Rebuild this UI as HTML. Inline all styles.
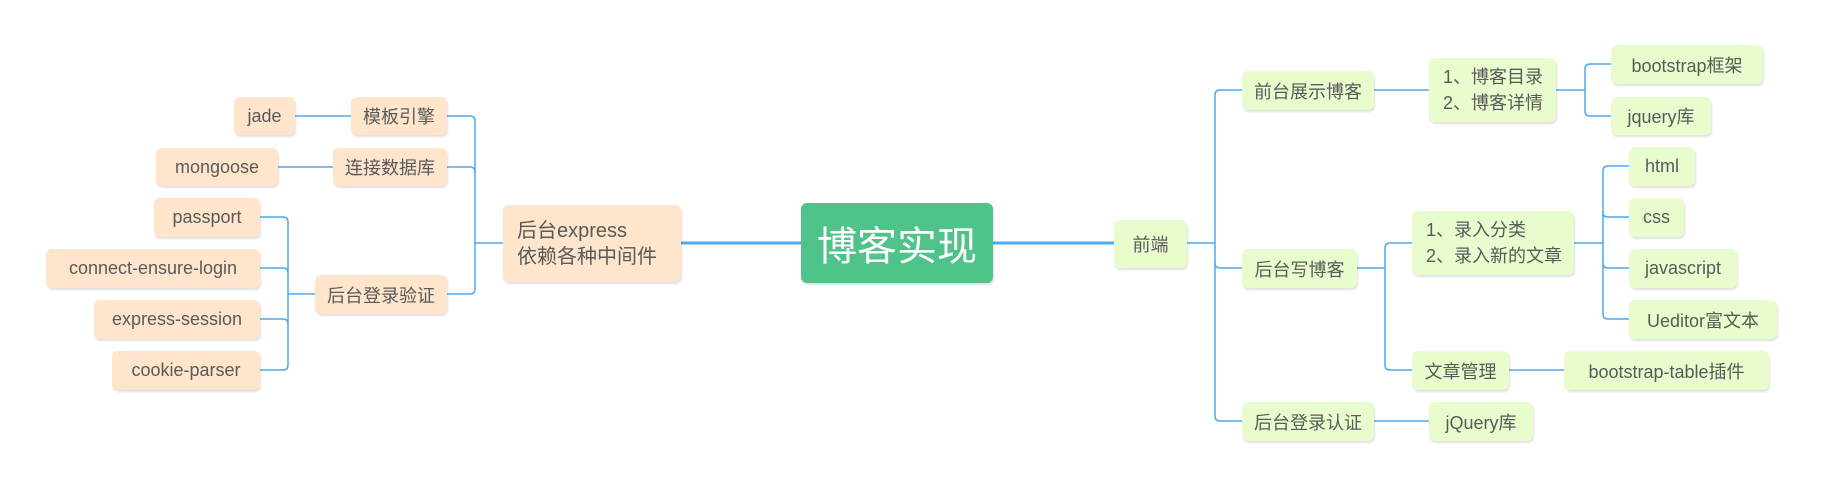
<!DOCTYPE html>
<html><head><meta charset="utf-8"><style>
body{margin:0;width:1834px;height:489px;background:#fff;position:relative;overflow:hidden;font-family:"Liberation Sans","Noto Sans CJK SC",sans-serif;}
.b{position:absolute;box-sizing:border-box;border-radius:6px;color:#5a5a5a;font-size:18px;display:flex;align-items:center;justify-content:center;white-space:nowrap;box-shadow:1px 2px 2px rgba(0,0,0,0.12);}
.p{background:#fee5cb;}
.g{background:#e8fccd;}
.m{background:#50c38a;color:#fff;font-size:40px;}
.ml{justify-content:flex-start;padding-left:14px;line-height:26px;}
svg{position:absolute;left:0;top:0;}
</style></head><body>
<svg width="1834" height="489" fill="none" stroke="#4da9f2" stroke-width="1.5">
<path d="M681 243H801" stroke-width="3"/>
<path d="M993 243H1114" stroke-width="3"/>
<path d="M503 243H475"/>
<path d="M447 116H470Q475 116 475 121V289Q475 294 470 294H447"/>
<path d="M447 167H470Q475 167 475 172"/>
<path d="M295 116H351"/><path d="M278 167H333"/>
<path d="M315 294H288"/>
<path d="M260 217H283Q288 217 288 222V365Q288 370 283 370H260"/>
<path d="M260 268H283Q288 268 288 273"/>
<path d="M260 319H283Q288 319 288 324"/>
<path d="M1187 243H1215"/>
<path d="M1242 90H1220Q1215 90 1215 95V416Q1215 421 1220 421H1242"/>
<path d="M1242 268H1220Q1215 268 1215 263"/>
<path d="M1374 90H1429"/>
<path d="M1556 90H1585"/>
<path d="M1611 64H1590Q1585 64 1585 69V111Q1585 116 1590 116H1611"/>
<path d="M1357 268H1385"/>
<path d="M1412 243H1390Q1385 243 1385 248V365Q1385 370 1390 370H1412"/>
<path d="M1574 243H1603"/>
<path d="M1629 166H1608Q1603 166 1603 171V314Q1603 319 1608 319H1629"/>
<path d="M1629 217H1608Q1603 217 1603 212"/>
<path d="M1629 268H1608Q1603 268 1603 263"/>
<path d="M1509 370H1564"/>
<path d="M1374 421H1429"/>
</svg>
<div class="b m" style="left:801px;top:203px;width:192px;height:80px">博客实现</div>
<div class="b p ml" style="left:503px;top:205px;width:178px;height:77px;font-size:20px">后台express<br>依赖各种中间件</div>
<div class="b p" style="left:234px;top:97px;width:61px;height:38px">jade</div>
<div class="b p" style="left:351px;top:97px;width:96px;height:38px">模板引擎</div>
<div class="b p" style="left:156px;top:148px;width:122px;height:38px">mongoose</div>
<div class="b p" style="left:333px;top:148px;width:114px;height:38px">连接数据库</div>
<div class="b p" style="left:154px;top:198px;width:106px;height:39px">passport</div>
<div class="b p" style="left:46px;top:249px;width:214px;height:39px">connect-ensure-login</div>
<div class="b p" style="left:94px;top:300px;width:166px;height:39px">express-session</div>
<div class="b p" style="left:112px;top:351px;width:148px;height:39px">cookie-parser</div>
<div class="b p" style="left:315px;top:275px;width:132px;height:39px">后台登录验证</div>
<div class="b g" style="left:1114px;top:220px;width:73px;height:48px">前端</div>
<div class="b g" style="left:1242px;top:71px;width:132px;height:39px">前台展示博客</div>
<div class="b g ml" style="left:1429px;top:58px;width:127px;height:64px">1、博客目录<br>2、博客详情</div>
<div class="b g" style="left:1611px;top:45px;width:152px;height:39px">bootstrap框架</div>
<div class="b g" style="left:1611px;top:97px;width:100px;height:38px">jquery库</div>
<div class="b g" style="left:1242px;top:249px;width:115px;height:39px">后台写博客</div>
<div class="b g ml" style="left:1412px;top:211px;width:162px;height:64px">1、录入分类<br>2、录入新的文章</div>
<div class="b g" style="left:1629px;top:147px;width:66px;height:39px">html</div>
<div class="b g" style="left:1629px;top:198px;width:55px;height:39px">css</div>
<div class="b g" style="left:1629px;top:249px;width:108px;height:39px">javascript</div>
<div class="b g" style="left:1629px;top:300px;width:148px;height:39px">Ueditor富文本</div>
<div class="b g" style="left:1412px;top:351px;width:97px;height:39px">文章管理</div>
<div class="b g" style="left:1564px;top:351px;width:205px;height:39px">bootstrap-table插件</div>
<div class="b g" style="left:1242px;top:402px;width:132px;height:39px">后台登录认证</div>
<div class="b g" style="left:1429px;top:402px;width:104px;height:39px">jQuery库</div>
</body></html>
